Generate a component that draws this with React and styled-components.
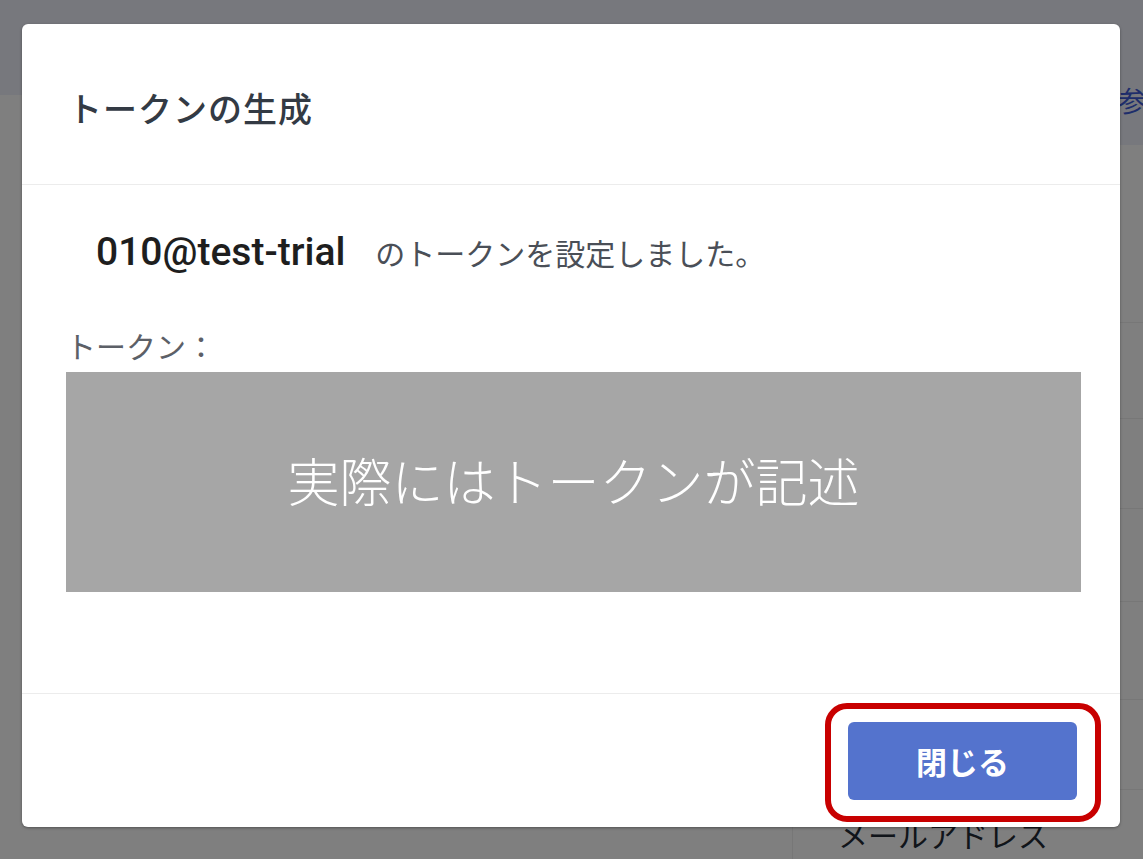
import React from "react";
import styled, { createGlobalStyle } from "styled-components";

const GlobalStyle = createGlobalStyle`
  html, body {
    margin: 0;
    padding: 0;
    font-family: "Noto Sans CJK JP", "Noto Sans", sans-serif;
  }
`;

const Page = styled.div`
  position: relative;
  width: 1143px;
  height: 859px;
  overflow: hidden;
  background: #ffffff;
  display: flex;
`;

const Sidebar = styled.aside`
  width: 40px;
  flex-shrink: 0;
`;

const SidebarHead = styled.div`
  height: 95px;
  background: #eef0fa;
`;

const Main = styled.main`
  flex: 1;
  display: flex;
  flex-direction: column;
`;

const MainHead = styled.div`
  height: 145px;
  flex-shrink: 0;
  background: #eef0fa;
  display: flex;
  align-items: center;
  padding: 54px 0 0 1078px;
  box-sizing: border-box;
`;

const HeadLink = styled.span`
  font-size: 28px;
  color: #3d5bd6;
  white-space: nowrap;
`;

const Row = styled.div`
  height: ${({ h }) => h}px;
  flex-shrink: 0;
  border-bottom: 1px solid #eeeeee;
  box-sizing: border-box;
  display: flex;
`;

const Cell = styled.div`
  margin-left: ${({ offset }) => offset}px;
  border-left: 1px solid #eeeeee;
  padding: 22px 0 0 45px;
  font-size: 30px;
  color: #222a35;
  white-space: nowrap;
`;

const Overlay = styled.div`
  position: absolute;
  inset: 0;
  background: rgba(0, 0, 0, 0.5);
`;

const Modal = styled.div`
  position: absolute;
  left: 22px;
  top: 24px;
  width: 1098px;
  height: 803px;
  background: #ffffff;
  border-radius: 6px;
  box-shadow: 0 1px 3px rgba(0, 0, 0, 0.35);
  display: flex;
  flex-direction: column;
`;

const Header = styled.header`
  height: 161px;
  flex-shrink: 0;
  border-bottom: 1px solid #ececec;
  box-sizing: border-box;
  display: flex;
  align-items: center;
  padding: 6px 0 0 46px;
`;

const Title = styled.h2`
  margin: 0;
  font-size: 34px;
  font-weight: 500;
  letter-spacing: 1px;
  color: #333a44;
`;

const Body = styled.section`
  flex: 1;
  padding: 0 39px 0 44px;
  display: flex;
  flex-direction: column;
`;

const Message = styled.p`
  margin: 43px 0 0;
  height: 48px;
  display: flex;
  align-items: center;
  white-space: nowrap;
`;

const Account = styled.span`
  margin-left: 30px;
  font-family: Roboto, "Liberation Sans", sans-serif;
  font-size: 39px;
  font-weight: 500;
  color: #1e1e1e;
`;

const MessageText = styled.span`
  margin-left: 30px;
  font-size: 30px;
  color: #4a4f57;
`;

const Label = styled.div`
  margin-top: 49px;
  height: 40px;
  line-height: 40px;
  font-size: 30px;
  color: #5c6067;
`;

const TokenBox = styled.div`
  margin-top: 7px;
  height: 220px;
  background: #a6a6a6;
  color: #ffffff;
  display: flex;
  align-items: center;
  justify-content: center;
  font-size: 52px;
  font-weight: 300;
  padding-bottom: 6px;
  box-sizing: border-box;
`;

const Footer = styled.footer`
  height: 134px;
  flex-shrink: 0;
  border-top: 1px solid #ececec;
  box-sizing: border-box;
  display: flex;
  align-items: center;
  justify-content: flex-end;
  padding-right: 43px;
`;

const Button = styled.button`
  position: relative;
  width: 229px;
  height: 78px;
  border: none;
  border-radius: 6px;
  background: #5473cd;
  color: #ffffff;
  font-family: inherit;
  font-size: 31px;
  font-weight: 700;
  cursor: pointer;

  &::after {
    content: "";
    position: absolute;
    top: -19px;
    left: -23px;
    right: -24px;
    bottom: -22px;
    border: 6px solid #c80000;
    border-radius: 22px;
    pointer-events: none;
  }
`;

const rows = [178, 96, 90, 93, 98, 90];

export default function App() {
  return (
    <>
      <GlobalStyle />
      <Page>
        <Sidebar>
          <SidebarHead />
        </Sidebar>
        <Main>
          <MainHead>
            <HeadLink>参加者</HeadLink>
          </MainHead>
          {rows.map((h, i) => (
            <Row key={i} h={h} />
          ))}
          <Row h={120}>
            <Cell offset={752}>メールアドレス</Cell>
          </Row>
        </Main>
        <Overlay />
        <Modal>
          <Header>
            <Title>トークンの生成</Title>
          </Header>
          <Body>
            <Message>
              <Account>010@test-trial</Account>
              <MessageText>のトークンを設定しました。</MessageText>
            </Message>
            <Label>トークン：</Label>
            <TokenBox>実際にはトークンが記述</TokenBox>
          </Body>
          <Footer>
            <Button>閉じる</Button>
          </Footer>
        </Modal>
      </Page>
    </>
  );
}
